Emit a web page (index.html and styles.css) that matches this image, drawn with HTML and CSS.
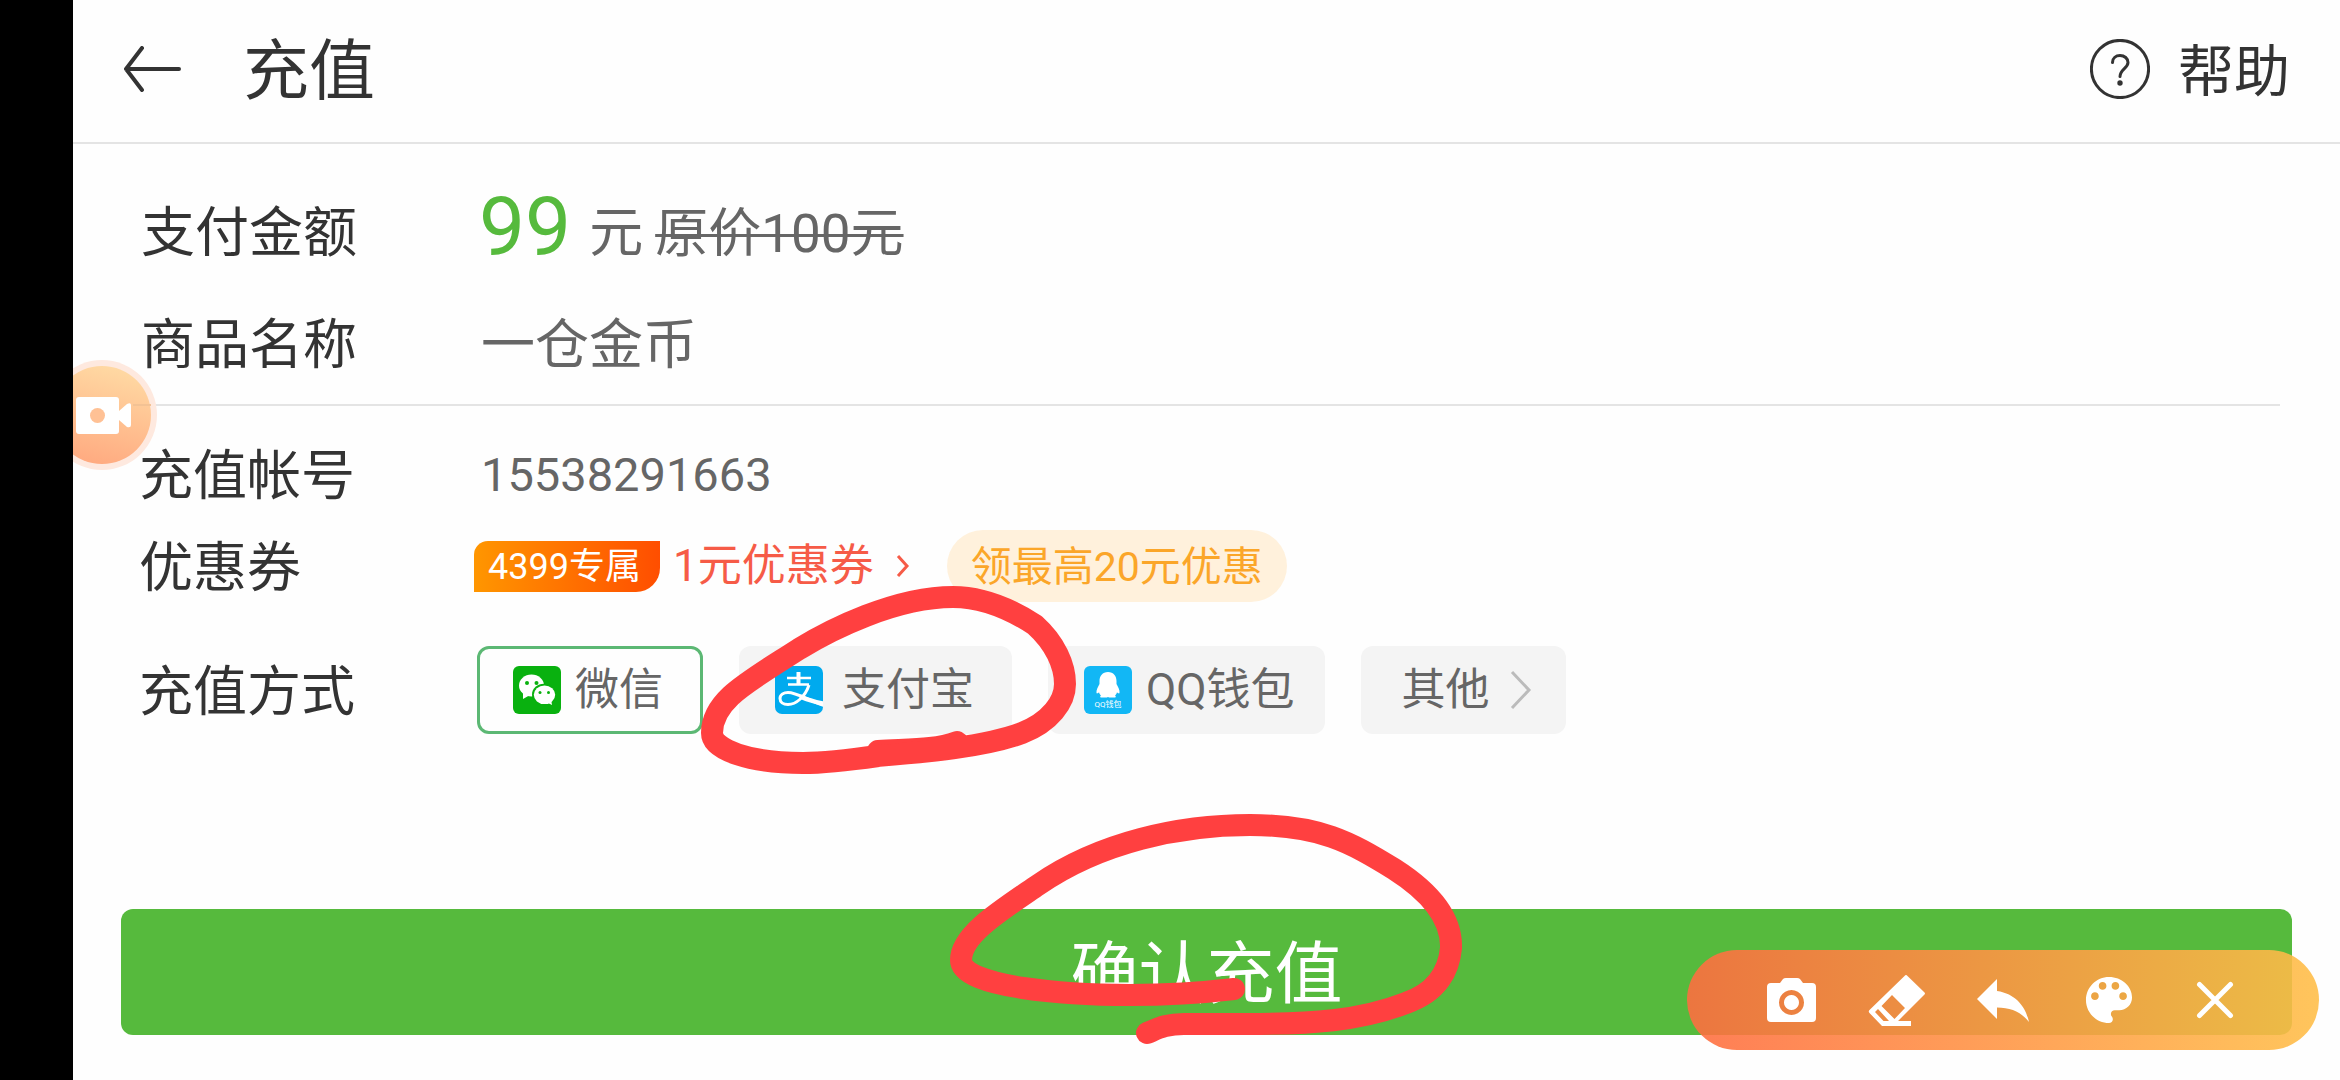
FILE: index.html
```html
<!DOCTYPE html>
<html lang="zh-CN">
<head>
<meta charset="utf-8">
<meta name="viewport" content="width=device-width, initial-scale=1">
<title>充值</title>
<link rel="stylesheet" href="styles.css">
</head>
<body>
<div class="app">
  <header class="topbar">
    <button class="back" type="button" aria-label="返回">
      <svg width="58" height="46" viewBox="0 0 58 46"><path d="M56 23H3M19 2 3 23l16 21"/></svg>
    </button>
    <h1 class="title">充值</h1>
    <a class="help" href="#">
      <svg width="60" height="60" viewBox="0 0 60 60">
        <circle cx="30" cy="30" r="28.6"/>
        <path d="M22.500 23.500C22.500 19 26 16.500 30 16.500c4.500 0 8 3 8 7 0 5.500-8 7-8 14"/>
        <circle class="dot" cx="30" cy="44" r="2.700"/>
      </svg>
      <span>帮助</span>
    </a>
  </header>

  <main class="content">
    <dl class="section order">
      <div class="row">
        <dt class="label">支付金额</dt>
        <dd class="value"><span class="price">99</span><span class="unit">元</span><s class="original">原价100元</s></dd>
      </div>
      <div class="row">
        <dt class="label">商品名称</dt>
        <dd class="value product">一仓金币</dd>
      </div>
    </dl>

    <form class="section pay">
      <div class="row short">
        <span class="label">充值帐号</span>
        <span class="value account">15538291663</span>
      </div>
      <div class="row short">
        <span class="label">优惠券</span>
        <div class="value coupons">
          <span class="badge">4399专属</span>
          <a class="coupon" href="#">1元优惠券
            <svg width="14" height="24" viewBox="0 0 14 24"><path d="M2 2l9 10-9 10"/></svg>
          </a>
          <a class="pill" href="#">领最高20元优惠</a>
        </div>
      </div>
      <div class="row methods-row">
        <span class="label" id="method-label">充值方式</span>
        <div class="methods" role="radiogroup" aria-labelledby="method-label">
          <label class="method wechat">
            <input type="radio" name="method" checked>
            <svg width="48" height="48" viewBox="0 0 48 48">
              <rect width="48" height="48" rx="6" fill="#09b10f"/>
              <ellipse cx="18.500" cy="19.500" rx="12.500" ry="11" fill="#fff"/>
              <path d="M10 26v7l7-4z" fill="#fff"/>
              <ellipse cx="31" cy="28.500" rx="12" ry="10.800" fill="#09b10f"/>
              <ellipse cx="31.500" cy="28.800" rx="10.700" ry="9.300" fill="#fff"/>
              <path d="M33 36l6 3-1-6z" fill="#fff"/>
              <g fill="#09b10f"><circle cx="14" cy="17" r="2"/><circle cx="23.500" cy="17" r="2"/><circle cx="27" cy="26.500" r="1.500"/><circle cx="35.500" cy="26.500" r="1.500"/></g>
            </svg>
            微信
          </label>
          <label class="method alipay">
            <input type="radio" name="method">
            <svg width="48" height="48" viewBox="0 0 48 48">
              <rect width="48" height="48" rx="7" fill="#00aaee"/>
              <g fill="none" stroke="#fff">
                <path d="M12 12h24M13 18.500h21" stroke-width="2.500"/>
                <path d="M23.500 6v13" stroke-width="4"/>
                <path d="M34 19C30 31 21 38.500 13 38.500c-5 0-8-2.500-8-6 0-4 4-6 8-6 8 0 17 6 36 13" stroke-width="3"/>
                <path d="M25 30.500q10 4.500 23 7" stroke-width="4.500"/>
              </g>
            </svg>
            支付宝
          </label>
          <label class="method qq">
            <input type="radio" name="method">
            <svg width="48" height="48" viewBox="0 0 48 48">
              <rect width="48" height="48" rx="6" fill="#12b7f5"/>
              <path d="M24 6c-5.500 0-8.500 4-8.500 9v3C14 21 12 24 12.500 27c.3 1 1.800 0 2.500-.8.500 1.800 1.200 2.600 2 3.300-1 .6-1.200 1.800 0 2.100h5.800L24 31l1.200.6H31c1.200-.3 1-1.500 0-2.100.8-.7 1.500-1.500 2-3.300.7.8 2.200 1.800 2.500.8.500-3-1.500-6-3-9v-3c0-5-3-9-8.500-9z" fill="#fff"/>
              <text class="qq-caption" x="24" y="41" text-anchor="middle">QQ钱包</text>
            </svg>
            QQ钱包
          </label>
          <button class="method other" type="button">其他
            <svg width="22" height="40" viewBox="0 0 22 40"><path d="M2 2l17 18L2 38"/></svg>
          </button>
        </div>
      </div>
      <button class="confirm" type="button">确认充值</button>
    </form>
  </main>

  <button class="recorder" type="button" aria-label="录屏">
    <svg width="84" height="110" viewBox="0 0 84 110">
      <defs><linearGradient id="rec" x1="0.350" y1="1" x2="0.600" y2="0"><stop offset="0" stop-color="#ffaa80"/><stop offset="1" stop-color="#ffd9a3"/></linearGradient></defs>
      <circle cx="29" cy="55" r="55" fill="#fee9df"/>
      <circle cx="29" cy="55" r="49" fill="url(#rec)"/>
      <path d="M60 45h18" stroke="#f3c294" stroke-width="2"/>
      <rect x="3" y="37" width="43" height="37" rx="3" fill="#fff"/>
      <path d="M46 51l8-7q4-2 4 1v20q0 3-4 2l-8-7z" fill="#fff"/>
      <circle cx="24.500" cy="55.500" r="7.500" fill="#ffc195"/>
    </svg>
  </button>
</div>

<svg class="marks" viewBox="0 0 2340 1080" aria-hidden="true">
  <path d="M878 751C910 749 935 750 957 742"/>
  <path d="M878 756C850 760 825 763 803 763C750 763 712 750 712 733C712 700 748 682 799 649C830 630 895 597 953 597C985 597 1012 610 1035 625C1055 643 1065 665 1065 684C1065 702 1050 722 1022 733C985 747 925 752 878 756"/>
  <path d="M1234 989C1200 993 1165 995 1130 995C1070 995 961 988 961 960C961 935 1000 911 1038 885C1100 842 1180 825 1250 825C1320 825 1350 842 1394 869C1430 892 1452 918 1451 948C1449 970 1438 992 1406 1003C1360 1021 1310 1024 1248 1024H1184C1165 1024 1157 1029 1147 1033"/>
</svg>

<div class="toolbar" role="toolbar" aria-label="标注工具">
  <button type="button" aria-label="截图"><svg width="64" height="64" viewBox="0 0 64 64"><path fill-rule="evenodd" d="M12 15h9l3-4q1-1 3-1h11q2 0 3 1l3 4h9q4 0 4 4v31q0 4-4 4H12q-4 0-4-4V19q0-4 4-4zM32.500 22a12.500 12.500 0 1 0 .01 0zM32.500 27a7.500 7.500 0 1 1-.01 0z"/></svg></button>
  <button type="button" aria-label="橡皮擦"><svg width="64" height="64" viewBox="0 0 64 64"><path fill-rule="evenodd" d="M39.500 8q1.500-2 3 0L59 24q2 1.500 0 3L33 53h13v5H17L4.500 45q-1.500-1.500 0-3zM27 27 16.500 38l13 13L40 40zM13 41l-3 3 8.500 9H24z"/></svg></button>
  <button type="button" aria-label="撤销"><svg width="64" height="64" viewBox="0 0 64 64"><path d="M26 23V11L6 31l20 20V39.500c14 0 24 4.500 32 14.500-3-14-12-28-32-31z"/></svg></button>
  <button type="button" aria-label="调色板"><svg width="64" height="64" viewBox="-0.500 -0.500 25 25"><path d="M12 3c-4.970 0-9 4.030-9 9s4.030 9 9 9c.83 0 1.500-.67 1.500-1.500 0-.39-.15-.74-.39-1.010-.23-.26-.38-.61-.38-.99 0-.83.67-1.500 1.500-1.500H16c2.760 0 5-2.240 5-5 0-4.420-4.030-8-9-8zm-5.500 9c-.83 0-1.500-.67-1.500-1.500S5.670 9 6.500 9 8 9.670 8 10.500 7.330 12 6.500 12zm3-4C8.670 8 8 7.330 8 6.500S8.670 5 9.500 5s1.500.67 1.500 1.500S10.330 8 9.500 8zm5 0c-.83 0-1.500-.67-1.500-1.500S13.670 5 14.500 5s1.500.67 1.500 1.500S15.330 8 14.500 8zm3 4c-.83 0-1.500-.67-1.500-1.500S16.670 9 17.500 9s1.500.67 1.500 1.500-.67 1.500-1.500 1.500z"/></svg></button>
  <button type="button" aria-label="关闭"><svg width="64" height="64" viewBox="0 0 64 64"><path class="line" d="M16.500 16.500l31 31m0-31l-31 31"/></svg></button>
</div>
</body>
</html>
```
FILE: styles.css
```css
* { box-sizing: border-box; }

body {
  margin: 0;
  min-height: 100vh;
  position: relative;
  background: #000;
  color: #333;
  font-family: Roboto, "Noto Sans CJK SC", sans-serif;
  font-size: 54px;
  line-height: 1;
}

button {
  padding: 0;
  border: 0;
  background: none;
  font: inherit;
  color: inherit;
}

a { color: inherit; text-decoration: none; }
svg { display: block; flex: none; }

.app {
  position: relative;
  min-height: 100vh;
  margin-left: 73px;
  background: #fefefe;
}

.topbar {
  display: flex;
  align-items: center;
  height: 144px;
  padding: 0 50px 4px;
  border-bottom: 2px solid #e4e4e4;
}

.back svg { fill: none; stroke: #333; stroke-width: 4; stroke-linecap: round; stroke-linejoin: round; }
.title { margin: 0 0 0 62px; padding-top: 6px; font-size: 66px; font-weight: 400; }
.help { display: flex; align-items: center; gap: 28px; margin-left: auto; font-size: 56px; }
.help span { padding-top: 6px; }
.help svg { fill: none; stroke: #333; stroke-width: 3; stroke-linecap: round; }
.help .dot { fill: #333; stroke: none; }

.content { padding: 0 48px 0 60px; }
.section { margin: 0; }

.order {
  margin-right: 12px;
  padding: 31px 8px 5px;
  border-bottom: 2px solid #e4e4e4;
}

.row { display: flex; align-items: center; height: 112px; }
.row.short { height: 92px; }
.label { flex: none; width: 338px; padding-top: 6px; }
.value { display: flex; align-items: center; margin: 0; color: #666; }
.product { padding: 6px 0 0 2px; }
.price { margin-right: 18px; padding-bottom: 8px; font-size: 82px; color: #56ba3d; }
.unit { margin-right: 12px; padding-top: 6px; }
.original { padding-top: 6px; font-size: 53px; text-decoration-thickness: 3px; }
.account { padding-left: 2px; font-size: 47px; }

.pay { padding: 22px 0 0; }
.pay .row { padding-left: 8px; }
.pay .label { margin-left: -2px; width: 340px; }

.coupons { margin-left: -5px; }
.badge {
  padding: 8px 19px 7px 14px;
  border-radius: 14px 0 24px 0;
  background: linear-gradient(90deg, #ff9600, #ff4e00);
  font-size: 36px;
  color: #fff;
}
.coupon { display: flex; align-items: center; gap: 22px; margin: 0 37px 0 13px; font-size: 44px; color: #f65b47; }
.coupon svg { fill: none; stroke: #f65b47; stroke-width: 3; }
.pill {
  padding: 17px 24px 14px;
  border-radius: 36px;
  background: #fff1dc;
  font-size: 41px;
  color: #fba629;
}

.methods-row { height: 88px; margin-top: 34px; }
.methods { display: flex; gap: 36px; margin-left: -2px; color: #666; font-size: 44px; }
.method {
  display: flex;
  align-items: center;
  gap: 14px;
  height: 88px;
  padding: 0 36px;
  border-radius: 12px;
  background: #f4f4f4;
}
.method input { position: absolute; opacity: 0; pointer-events: none; }
.method:has(input:checked) { border: 3px solid #5cb874; background: #fefefe; }
.wechat { padding: 0 37px 0 33px; }
.alipay { gap: 19px; padding-right: 38px; }
.qq { padding-right: 30px; }
.other { gap: 20px; padding: 0 34px 0 41px; }
.other svg { fill: none; stroke: #bbb; stroke-width: 3; }
.qq-caption { font-size: 8px; fill: #fff; }

.confirm {
  display: block;
  width: calc(100% + 12px);
  height: 126px;
  margin: 175px 0 45px -12px;
  padding-top: 6px;
  border-radius: 12px;
  background: #56ba3d;
  font-size: 68px;
  color: #fff;
}

.recorder { position: absolute; left: 0; top: 360px; }

.marks {
  position: absolute;
  left: 0;
  top: 0;
  width: 100%;
  fill: none;
  stroke: #ff4040;
  stroke-width: 22;
  stroke-linecap: round;
  stroke-linejoin: round;
  pointer-events: none;
}

.toolbar {
  position: absolute;
  right: 21px;
  bottom: 30px;
  display: flex;
  height: 100px;
  padding: 0 51px;
  border-radius: 50px;
  background: linear-gradient(90deg, rgba(255, 109, 64, .89), rgba(255, 190, 72, .89));
}
.toolbar button { display: grid; place-items: center; width: 106px; }
.toolbar svg { fill: #fff; }
.toolbar .line { stroke: #fff; stroke-width: 5; stroke-linecap: round; }
```
